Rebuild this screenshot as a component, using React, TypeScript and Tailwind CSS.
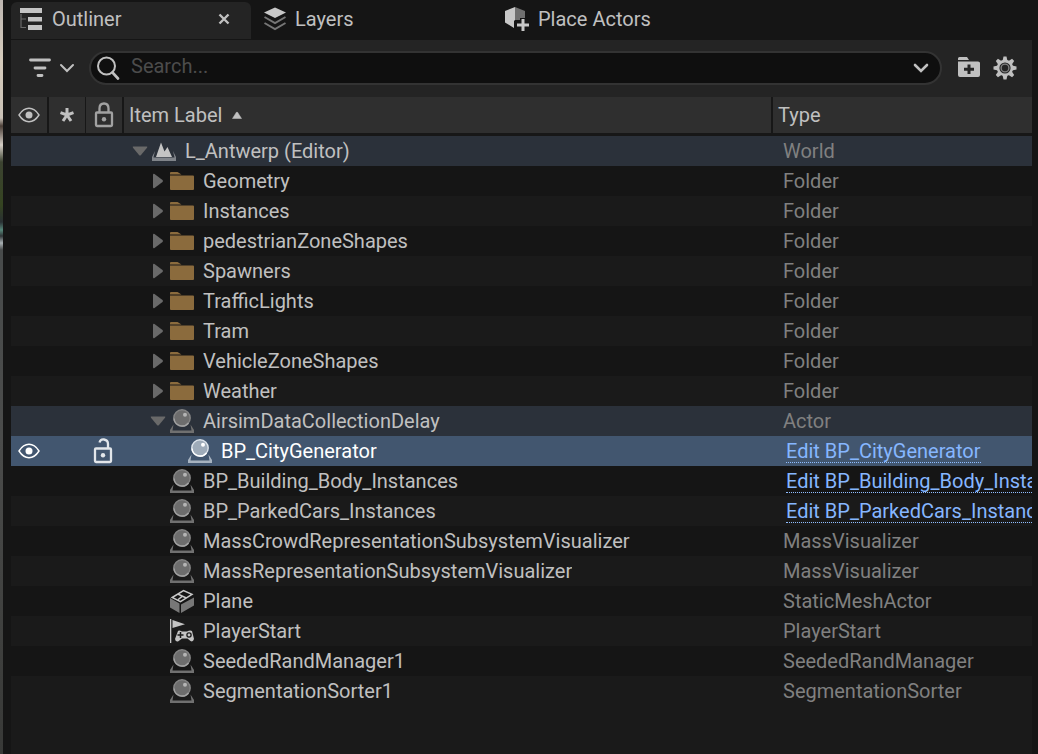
import type { ReactNode } from 'react';
import { clsx } from 'clsx';

type Kind = 'world' | 'folder' | 'actor' | 'mesh' | 'player';

interface Item {
  label: string;
  type: string;
  kind: Kind;
  depth: 0 | 1 | 2;
  expander?: 'open' | 'closed';
  tone?: 'parent' | 'selected';
  link?: boolean;
}

const folder = (label: string): Item => ({ label, type: 'Folder', kind: 'folder', depth: 1, expander: 'closed' });
const actor = (label: string, type: string, link = false): Item => ({ label, type, kind: 'actor', depth: 1, link });

const items: Item[] = [
  { label: 'L_Antwerp (Editor)', type: 'World', kind: 'world', depth: 0, expander: 'open', tone: 'parent' },
  folder('Geometry'),
  folder('Instances'),
  folder('pedestrianZoneShapes'),
  folder('Spawners'),
  folder('TrafficLights'),
  folder('Tram'),
  folder('VehicleZoneShapes'),
  folder('Weather'),
  { label: 'AirsimDataCollectionDelay', type: 'Actor', kind: 'actor', depth: 1, expander: 'open', tone: 'parent' },
  { label: 'BP_CityGenerator', type: 'Edit BP_CityGenerator', kind: 'actor', depth: 2, tone: 'selected', link: true },
  actor('BP_Building_Body_Instances', 'Edit BP_Building_Body_Instances', true),
  actor('BP_ParkedCars_Instances', 'Edit BP_ParkedCars_Instances', true),
  actor('MassCrowdRepresentationSubsystemVisualizer', 'MassVisualizer'),
  actor('MassRepresentationSubsystemVisualizer', 'MassVisualizer'),
  { label: 'Plane', type: 'StaticMeshActor', kind: 'mesh', depth: 1 },
  { label: 'PlayerStart', type: 'PlayerStart', kind: 'player', depth: 1 },
  actor('SeededRandManager1', 'SeededRandManager'),
  actor('SegmentationSorter1', 'SegmentationSorter'),
];

const indent = { 0: 'pl-2', 1: 'pl-[26px]', 2: 'pl-11' };

function Icon({ children, className = 'size-6', box = '0 0 24 24' }: { children: ReactNode; className?: string; box?: string }) {
  return (
    <svg viewBox={box} className={clsx('block shrink-0', className)} fill="none" aria-hidden="true">
      {children}
    </svg>
  );
}

function EyeIcon() {
  return (
    <Icon>
      <path d="M2 12C5 7.3 8.200 5.300 12 5.300S19 7.300 22 12C19 16.700 15.800 18.700 12 18.700S5 16.700 2 12Z" stroke="currentColor" strokeWidth="1.400" />
      <circle cx="12" cy="12" r="3.500" fill="currentColor" />
    </Icon>
  );
}

function LockIcon({ open = false }: { open?: boolean }) {
  return (
    <Icon className="h-7 w-6" box="0 0 24 28">
      <rect x="4" y="11.500" width="16" height="13.500" rx="1" stroke="currentColor" strokeWidth="2.300" />
      <path d={open ? 'M8.500 5.500C9.200 3 11 2.200 13 2.500C15.600 2.900 17 4.500 17 7V11' : 'M7.500 11V7.500C7.500 4.500 9.300 2.500 12 2.500S16.500 4.500 16.500 7.500V11'} stroke="currentColor" strokeWidth="2.300" />
      <circle cx="12" cy="18.200" r="2.200" fill="currentColor" />
    </Icon>
  );
}

function ItemIcon({ kind, selected }: { kind: Kind; selected: boolean }) {
  if (kind === 'world')
    return (
      <Icon>
        <path d="M3 12L0 18V22H24V18L21 12L22.500 18.500H1.500Z" fill="#80848a" />
        <path d="M4 18L9 3.500L12.500 12.500L15.500 8L20 18Z" fill="#c4c4c4" />
      </Icon>
    );
  if (kind === 'folder')
    return (
      <Icon>
        <path d="M0 5V4Q0 3 1 3H7.500L11.500 5.500H0ZM0 6.500H23Q24 6.500 24 7.500V20Q24 21 23 21H1Q0 21 0 20Z" fill="#8b6b3d" />
      </Icon>
    );
  if (kind === 'mesh')
    return (
      <Icon>
        <path d="M0 9L9.500 14.500V24L0 18.500ZM24 8.500L11 15.500V24L24 16.500Z" fill="#777" />
        <path d="M2.200 8.500L13.500 1.500L22 5.300L10.500 12.700Z M7.800 5L16.300 9 M8.200 10.500L12.200 7.300" stroke="#c8c8c8" strokeWidth="1.500" />
      </Icon>
    );
  if (kind === 'player')
    return (
      <Icon>
        <path d="M0 0H1.300V24H0ZM2.500 1L15 5.300L2.500 9Z" fill="#c4c4c4" />
        <path d="M8 12Q9 11 12 12.500H17Q20 11 22 12L24 20Q23 23.500 20.500 22L17.500 19.500H12L8 22.500Q5.500 23 5 20Z" fill="#c4c4c4" />
        <path d="M7.500 16H13.500M10.500 13V19" stroke="#1a1a1a" strokeWidth="1.500" />
        <circle cx="19" cy="16" r="2.100" stroke="#1a1a1a" strokeWidth="1.300" />
      </Icon>
    );
  const dim = selected ? '#a7b3c0' : '#707070';
  return (
    <Icon>
      <path d="M3.500 15.500L0 21V24H24V21L20.500 15.500L21.500 21.500H2.500Z" fill={dim} />
      <circle cx="12" cy="9" r="8.200" fill={selected ? '#9eabb9' : '#6d6d6d'} stroke={selected ? '#dce3ea' : '#858585'} strokeWidth="1.400" />
      <path d="M4 9.500A8.200 8.200 0 0 0 18.500 14" stroke={selected ? '#fff' : '#a2a2a2'} strokeWidth="1.400" />
      <circle cx="15" cy="5.700" r="2" fill={selected ? '#fff' : '#b4b4b4'} />
    </Icon>
  );
}

function Expander({ state }: { state?: 'open' | 'closed' }) {
  if (!state) return <span className="w-4 shrink-0" />;
  return (
    <button type="button" aria-label={state === 'open' ? 'Collapse' : 'Expand'} className="w-4 shrink-0 text-[#696969]">
      <Icon className="size-4" box="0 0 16 16">
        <path d={state === 'open' ? 'M1.500 3.500H14.500Q16 3.500 15 4.800L9 12Q8 13 7 12L1 4.800Q0 3.500 1.500 3.500Z' : 'M3 2Q3 0 4.500 1L12.500 7Q13.500 8 12.500 9L4.500 15Q3 16 3 14Z'} fill="currentColor" />
      </Icon>
    </button>
  );
}

function Row({ item, index }: { item: Item; index: number }) {
  const selected = item.tone === 'selected';
  const background = selected ? 'bg-[#42566f]' : item.tone === 'parent' ? 'bg-[#2b313a]' : index % 2 ? 'bg-[#151515]' : 'bg-[#1a1a1a]';
  return (
    <tr className={clsx('h-[30px]', background, selected && 'text-white')}>
      <td className="p-0">
        {selected && <button type="button" aria-label="Toggle visibility" className="ml-1.5 block"><EyeIcon /></button>}
      </td>
      <td className="p-0" />
      <td className="p-0">
        {selected && <button type="button" aria-label="Toggle lock" className="ml-[5px] block text-[#e2e6ea]"><LockIcon open /></button>}
      </td>
      <td className="overflow-hidden p-0">
        <div className={clsx('flex h-[30px] items-center', indent[item.depth])}>
          <Expander state={item.expander} />
          <span className="ml-1"><ItemIcon kind={item.kind} selected={selected} /></span>
          <span className="ml-[9px] truncate">{item.label}</span>
        </div>
      </td>
      <td className="overflow-hidden whitespace-nowrap p-0 pl-2.5 text-[#808080]">
        {item.link ? (
          <a href="#edit" className="ml-[3px] inline-block border-b border-dotted border-[#8fbdff] leading-[22px] text-[#86b6ff]">{item.type}</a>
        ) : item.type}
      </td>
    </tr>
  );
}

export default function App() {
  return (
    <div className="flex min-h-screen bg-[#151515] font-[Roboto,sans-serif] text-xl leading-6 text-[#c0c0c0]">
      <div className="w-[3px] shrink-0 bg-[linear-gradient(180deg,#bcb5b0_0px,#d4cabb_60px,#c9c1b6_118px,#4c4038_126px,#d5cec5_145px,#3c4331_162px,#354421_205px,#293033_222px,#568578_230px,#303638_236px,#a9b0b3_243px,#484b4b_250px,#4b4c4b_440px,#383937_754px)]" />
      <main className="ml-2 mr-1.5 flex min-w-0 grow flex-col bg-[#1a1a1a]">
        <nav className="flex h-10 bg-[#151515]" aria-label="Panels">
          <div className="mb-px mt-0.5 flex w-60 items-center rounded-t-md bg-[#242424] pl-2">
            <button type="button" className="flex h-full items-center gap-[9px] pb-1">
              <Icon>
                <path d="M1 1H23V6H1ZM9 10H23V14.500H9ZM9 18H23V23H9Z" fill="#c4c4c4" />
                <path d="M2 7V20.500H7M2 12H7" stroke="#696969" strokeWidth="1.200" />
              </Icon>
              Outliner
            </button>
            <button type="button" aria-label="Close tab" className="ml-auto mr-[19px] pb-1">
              <Icon className="size-4" box="0 0 16 16">
                <path d="M3.500 3.500L12.500 12.500M12.500 3.500L3.500 12.500" stroke="currentColor" strokeWidth="2.400" />
              </Icon>
            </button>
          </div>
          <button type="button" className="flex w-60 items-center gap-2 pb-0.5 pl-3">
            <Icon>
              <path d="M1 5.500L12 .5L23 5.500L12 11Z" fill="#c8c8c8" />
              <path d="M1.500 10L12 16L22.500 10M1.500 16L12 22L22.500 16" stroke="#767676" strokeWidth="2" />
            </Icon>
            Layers
          </button>
          <button type="button" className="flex items-center gap-[9px] pb-0.5 pl-3">
            <Icon className="size-[26px]" box="0 0 26 26">
              <path d="M2 5L12 1V14L11 15V22L2 16.500Z" fill="#c8c8c8" />
              <path d="M12 1L22 5V12H17V14H12Z" fill="#707070" />
              <path d="M14 19H26M20 13V25" stroke="#c8c8c8" strokeWidth="3" />
            </Icon>
            Place Actors
          </button>
        </nav>

        <div className="flex h-[57px] items-center bg-[#242424] pb-px pr-3.5">
          <button type="button" aria-label="Filters" className="ml-4 flex items-center gap-1.5">
            <Icon className="size-[26px]" box="0 0 26 26">
              <path d="M3.500 5H22.500M8 13H18M11 20.500H15" stroke="currentColor" strokeWidth="2.800" strokeLinecap="round" />
            </Icon>
            <Icon className="size-4" box="0 0 16 16">
              <path d="M2 5L8 11L14 5" stroke="currentColor" strokeWidth="2" strokeLinecap="round" />
            </Icon>
          </button>
          <label className="ml-3.5 flex h-[34px] grow items-center rounded-full border-2 border-[#333] bg-[#0f0f0f] pl-[5px] pr-[11px]">
            <Icon>
              <circle cx="10.500" cy="10" r="8.500" stroke="currentColor" strokeWidth="2" />
              <path d="M16.500 16.500L22 22.500" stroke="currentColor" strokeWidth="2.600" strokeLinecap="round" />
            </Icon>
            <input type="text" aria-label="Search" placeholder="Search..." className="ml-[11px] h-6 w-full min-w-0 bg-transparent pb-1 outline-none placeholder:text-[#4c4c4c]" />
            <button type="button" aria-label="Search history">
              <Icon className="size-4" box="0 0 16 16">
                <path d="M2 5L8 11L14 5" stroke="currentColor" strokeWidth="2.600" strokeLinecap="round" />
              </Icon>
            </button>
          </label>
          <button type="button" aria-label="New folder" className="ml-3.5">
            <Icon className="size-[26px]" box="0 0 26 26">
              <path d="M2 5V3.500Q2 2 3.500 2H11L13 5ZM2 6.500H22Q24 6.500 24 8V20Q24 22 22 22H4Q2 22 2 20Z" fill="currentColor" />
              <path d="M8 14.300H18M13 9.500V19" stroke="#242424" strokeWidth="3" />
            </Icon>
          </button>
          <button type="button" aria-label="Settings" className="ml-2.5">
            <Icon className="size-[26px]" box="-13 -13 26 26">
              {[0, 45, 90, 135, 180, 225, 270, 315].map((angle) => (
                <path key={angle} d="M-2.500 -7L-1.500 -11.500H1.500L2.500 -7Z" fill="currentColor" transform={`rotate(${angle})`} />
              ))}
              <circle r="6.900" stroke="currentColor" strokeWidth="2.600" />
              <circle r="3.900" stroke="#808080" strokeWidth="1.400" />
            </Icon>
          </button>
        </div>

        <table className="w-full table-fixed border-separate border-spacing-0">
          <colgroup>
            <col className="w-[38px]" />
            <col className="w-[37px]" />
            <col className="w-[38px]" />
            <col />
            <col className="w-[259px]" />
          </colgroup>
          <thead>
            <tr className="h-[39px] bg-[#2f2f2f] text-left [&>th]:border-b-[3px] [&>th]:border-[#171717] [&>th]:p-0 [&>th]:font-normal">
              <th className="border-r-2"><span className="ml-1.5 block" role="img" aria-label="Visibility"><EyeIcon /></span></th>
              <th className="border-r">
                <Icon className="ml-1.5 size-6">
                  <path d="M12 5V12M5.500 9.700L12 12M18.500 9.700L12 12M8 18L12 12M16 18L12 12" stroke="currentColor" strokeWidth="3" />
                </Icon>
              </th>
              <th className="border-r-2"><span className="ml-1.5 block text-[#a2a2a2]" role="img" aria-label="Lock"><LockIcon /></span></th>
              <th className="border-r-2">
                <button type="button" className="ml-[5px] flex items-center gap-[9px]">
                  Item Label
                  <Icon className="h-2 w-3" box="0 0 12 8">
                    <path d="M1.500 7.500L5.300 1.500Q6 .5 6.700 1.500L10.500 7.500Z" fill="currentColor" stroke="currentColor" strokeWidth=".5" />
                  </Icon>
                </button>
              </th>
              <th><button type="button" className="ml-[5px] block">Type</button></th>
            </tr>
          </thead>
          <tbody>
            {items.map((item, index) => <Row key={item.label} item={item} index={index} />)}
          </tbody>
        </table>
      </main>
    </div>
  );
}
